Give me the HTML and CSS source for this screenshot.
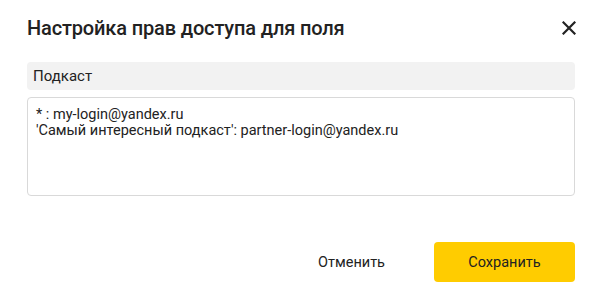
FILE: index.html
```html
<!DOCTYPE html>
<html>
<head>
  <title>Настройка прав доступа для поля</title>
  <link rel="stylesheet" href="styles.css">
</head>
<body>
  <div class="modal">
    <div class="modal-header">
      <h1 class="modal-title">Настройка прав доступа для поля</h1>
      <button type="button" class="close-btn" aria-label="Закрыть">
        <svg width="14" height="14" viewBox="0 0 14 14">
          <path d="M1.5 1.5 L12.5 12.5 M12.5 1.5 L1.5 12.5" stroke="#222" stroke-width="2.2" stroke-linecap="square"/>
        </svg>
      </button>
    </div>

    <div class="field-name">Подкаст</div>
    <textarea class="access-input">* : my-login@yandex.ru
'Самый интересный подкаст': partner-login@yandex.ru</textarea>

    <div class="modal-footer">
      <button type="button" class="btn btn-cancel">Отменить</button>
      <button type="submit" class="btn btn-save">Сохранить</button>
    </div>
  </div>
</body>
</html>
```

FILE: styles.css
```css
body {
  margin: 0;
  background-color: #fff;
  font-family: Roboto, "Noto Sans", Arial, sans-serif;
  color: #222;
}

.modal {
  width: 600px;
  height: 306px;
  box-sizing: border-box;
  padding: 0 25px 0 27px;
}

.modal-header {
  display: flex;
  align-items: center;
  justify-content: space-between;
  height: 56px;
}

.modal-title {
  margin: 0;
  font-size: 20px;
  font-weight: 500;
  letter-spacing: -0.15px;
}

.close-btn {
  display: flex;
  padding: 0;
  margin-right: -1px;
  border: none;
  background: none;
  cursor: pointer;
}

.field-name {
  margin-top: 6px;
  height: 28px;
  line-height: 28px;
  padding: 0 6px;
  font-size: 15px;
  background-color: #f2f2f2;
  border-radius: 4px;
}

.access-input {
  display: block;
  width: 100%;
  height: 99px;
  box-sizing: border-box;
  margin-top: 7px;
  padding: 9px 8px 8px;
  border: 1px solid #d9d9d9;
  border-radius: 4px;
  font-family: inherit;
  font-size: 14.5px;
  line-height: 16px;
  color: #222;
  resize: none;
}

.modal-footer {
  display: flex;
  justify-content: flex-end;
  align-items: center;
  gap: 16px;
  margin-top: 46px;
}

.btn {
  height: 40px;
  border: none;
  border-radius: 4px;
  font-family: inherit;
  font-size: 14.5px;
  color: #222;
  cursor: pointer;
}

.btn-cancel {
  padding: 0 33px;
  background: none;
}

.btn-save {
  width: 141px;
  background-color: #ffcc00;
}
```
